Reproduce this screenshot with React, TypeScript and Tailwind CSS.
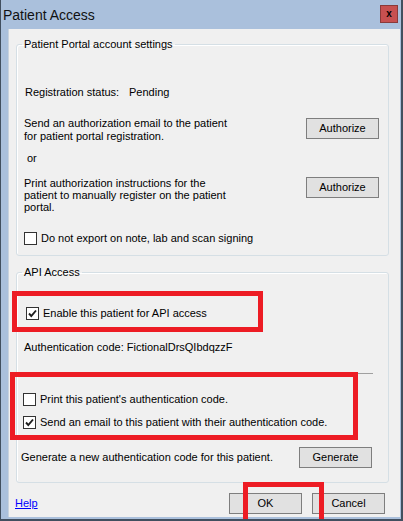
import React from 'react';

const font = { fontFamily: '"Liberation Sans", Arial, sans-serif' };

function Box({ checked }: { checked?: boolean }) {
  return (
    <span className="w-[13px] h-[13px] shrink-0 border border-[#333333] bg-white flex items-center justify-center">
      {checked && (
        <svg width="11" height="11" viewBox="0 0 11 11">
          <path d="M2 5.5 L4.3 8 L9 2.5" fill="none" stroke="#1e1e1e" strokeWidth="1.9" />
        </svg>
      )}
    </span>
  );
}

function WinButton({ children, className = '' }: { children: React.ReactNode; className?: string }) {
  return (
    <button className={`h-[21px] w-[73px] shrink-0 border border-[#7e7e7e] bg-[#e1e1e1] text-[11px] leading-[13px] text-black ${className}`}>
      {children}
    </button>
  );
}

export default function App() {
  return (
    <div style={font} className="relative w-[403px] h-[521px] overflow-hidden flex flex-col bg-[#aac0dc] border-l border-r-2 border-b-2 border-[#414f5f] text-[11px] leading-[13px] text-black">
      {/* title bar */}
      <div className="h-[29px] shrink-0 flex items-start justify-between pl-[2px] pr-[3px]">
        <span className="text-[14px] leading-[16px] mt-[7px] text-[#111]">Patient Access</span>
        <span className="mt-[5px] w-[18px] h-[18px] bg-[#c75050] border border-[#8a3a3a] flex items-center justify-center text-[10px] leading-[10px] font-bold text-black pb-[1px]">
          x
        </span>
      </div>

      {/* client area */}
      <div className="flex-1 ml-[7px] mr-[1px] mb-[2px] bg-[#f0f0f0] border-l border-[#c8d3df] flex flex-col pl-[7px] pr-[11px]">
        {/* Patient portal group */}
        <fieldset className="mt-[9px] border border-[#d5dfe5] rounded-[3px] pl-[7px] pr-[9px] pb-[10px] shadow-[inset_1px_1px_0_#ffffff]">
          <legend className="ml-[-2px] px-[2px] leading-[13px]">Patient Portal account settings</legend>
          <div className="mt-[35px] flex pl-[1px]">
            <span className="w-[104px]">Registration status:</span>
            <span>Pending</span>
          </div>
          <div className="mt-[18px] flex justify-between items-start">
            <div className="leading-[13px]">
              Send an authorization email to the patient
              <br />
              for patient portal registration.
            </div>
            <WinButton className="mt-[1px]">Authorize</WinButton>
          </div>
          <div className="mt-[9px] pl-[3px]">or</div>
          <div className="mt-[12px] flex justify-between items-start">
            <div className="leading-[12px]">
              Print authorization instructions for the
              <br />
              patient to manually register on the patient
              <br />
              portal.
            </div>
            <WinButton>Authorize</WinButton>
          </div>
          <div className="mt-[19px] flex items-center gap-[4px]">
            <Box />
            <span>Do not export on note, lab and scan signing</span>
          </div>
        </fieldset>

        {/* API group */}
        <fieldset className="mt-[10px] border border-[#d5dfe5] rounded-[3px] pl-[7px] pr-[16px] pb-[14px] shadow-[inset_1px_1px_0_#ffffff]">
          <legend className="ml-[-2px] px-[2px] leading-[13px]">API Access</legend>
          <div className="mt-[28px] ml-[2px] flex items-center gap-[4px]">
            <Box checked />
            <span>Enable this patient for API access</span>
          </div>
          <div className="mt-[21px]">Authentication code: FictionalDrsQIbdqzzF</div>
          <div className="mt-[19px] mr-[-1px] border-t border-[#a0a0a0]" />
          <div className="mt-[19px] ml-[-1px] flex items-center gap-[4px]">
            <Box />
            <span>Print this patient's authentication code.</span>
          </div>
          <div className="mt-[10px] ml-[-1px] flex items-center gap-[4px]">
            <Box checked />
            <span>Send an email to this patient with their authentication code.</span>
          </div>
          <div className="mt-[18px] ml-[-3px] flex items-center justify-between">
            <span>Generate a new authentication code for this patient.</span>
            <WinButton>Generate</WinButton>
          </div>
        </fieldset>

        {/* footer */}
        <div className="mt-[10px] flex items-center">
          <a className="ml-[-1px] text-[#0000ff] underline">Help</a>
          <div className="ml-auto mr-[4px] flex gap-[10px]">
            <WinButton className="w-[62px] h-[20px]">OK</WinButton>
            <WinButton className="w-[61px] h-[20px]">Cancel</WinButton>
          </div>
        </div>
      </div>

      {/* annotation rectangles */}
      <div className="absolute left-[11px] top-[291px] w-[251px] h-[41px] border-[5px] border-[#ed1c24]" />
      <div className="absolute left-[9px] top-[372px] w-[348px] h-[68px] border-[5px] border-[#ed1c24]" />
      <div className="absolute left-[242px] top-[482px] w-[81px] h-[50px] border-[5px] border-[#ed1c24]" />
    </div>
  );
}
